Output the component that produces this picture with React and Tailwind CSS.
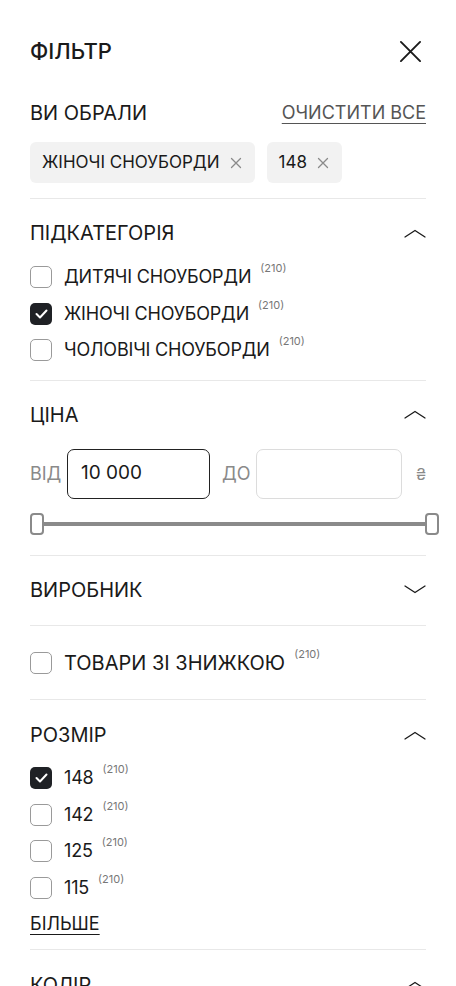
import React from 'react';

const font = { fontFamily: 'Inter, "Noto Sans", sans-serif' };

const ChevronUp = () => (
  <svg width="22" height="9" viewBox="0 0 22 9" fill="none" stroke="#1a1a1a" strokeWidth="1.3" strokeLinecap="round" strokeLinejoin="round">
    <path d="M1 8 L11 1.5 L21 8" />
  </svg>
);

const ChevronDown = () => (
  <svg width="22" height="9" viewBox="0 0 22 9" fill="none" stroke="#1a1a1a" strokeWidth="1.3" strokeLinecap="round" strokeLinejoin="round">
    <path d="M1 1 L11 7.5 L21 1" />
  </svg>
);

const Checkbox = ({ checked }) =>
  checked ? (
    <span className="flex h-[22px] w-[22px] shrink-0 items-center justify-center rounded-[5px] bg-[#1f2125]">
      <svg width="13" height="10" viewBox="0 0 13 10" fill="none" stroke="#fff" strokeWidth="2" strokeLinecap="round" strokeLinejoin="round">
        <path d="M1.5 5 L5 8.5 L11.5 1.5" />
      </svg>
    </span>
  ) : (
    <span className="h-[22px] w-[22px] shrink-0 rounded-[5px] border-[1.5px] border-[#9a9a9a] bg-white" />
  );

const Option = ({ label, checked, big }) => (
  <div className="flex h-[36.5px] items-center">
    <Checkbox checked={checked} />
    <span
      className={
        big
          ? 'ml-[12px] text-[20px] leading-none text-[#1a1a1a]'
          : 'ml-[12px] text-[18px] leading-none tracking-[-0.01em] text-[#1a1a1a]'
      }
    >
      {label}
    </span>
    <span className="ml-[9px] self-start pt-[4px] text-[11px] leading-none text-[#777]">(210)</span>
  </div>
);

const Heading = ({ title, open = true }) => (
  <div className="flex h-[22px] items-center justify-between">
    <span className="text-[20px] leading-none text-[#1a1a1a]">{title}</span>
    {open ? <ChevronUp /> : <ChevronDown />}
  </div>
);

const Chip = ({ label }) => (
  <div className="flex h-[41px] items-center rounded-[6px] bg-[#f2f2f2] pl-[12px] pr-[13px]">
    <span className="text-[17px] leading-none text-[#1a1a1a]">{label}</span>
    <svg className="ml-[10px]" width="12" height="12" viewBox="0 0 12 12" fill="none" stroke="#8a8a8a" strokeWidth="1.3" strokeLinecap="round">
      <path d="M1.5 1.5 L10.5 10.5 M10.5 1.5 L1.5 10.5" />
    </svg>
  </div>
);

export default function App() {
  return (
    <div className="min-h-screen w-[456px] overflow-hidden bg-white px-[30px]" style={font}>
      {/* header */}
      <div className="mt-[29px] flex h-[44px] items-center justify-between">
        <span className="text-[22px] font-medium leading-none text-[#1a1a1a]">ФІЛЬТР</span>
        <svg className="mr-[4px]" width="23" height="23" viewBox="0 0 24 24" fill="none" stroke="#1a1a1a" strokeWidth="2" strokeLinecap="round">
          <path d="M2 2 L22 22 M22 2 L2 22" />
        </svg>
      </div>

      <div className="mt-[25px] flex h-[30px] items-center justify-between">
        <span className="text-[20px] leading-none text-[#1a1a1a]">ВИ ОБРАЛИ</span>
        <span className="text-[18px] leading-none text-[#555] underline decoration-[1px] underline-offset-[4px]">ОЧИСТИТИ ВСЕ</span>
      </div>

      <div className="mt-[14px] flex gap-[12px]">
        <Chip label="ЖІНОЧІ СНОУБОРДИ" />
        <Chip label="148" />
      </div>

      {/* subcategory */}
      <div className="mt-[15px] border-t border-[#e8e8e8] pt-[23px] pb-[11px]">
        <Heading title="ПІДКАТЕГОРІЯ" />
        <div className="mt-[15px] flex flex-col">
          <Option label="ДИТЯЧІ СНОУБОРДИ" />
          <Option label="ЖІНОЧІ СНОУБОРДИ" checked />
          <Option label="ЧОЛОВІЧІ СНОУБОРДИ" />
        </div>
      </div>

      {/* price */}
      <div className="border-t border-[#e8e8e8] pt-[23px] pb-[20px]">
        <Heading title="ЦІНА" />
        <div className="mt-[23px] flex h-[50px] items-center">
          <span className="w-[37px] text-[18px] leading-none text-[#8a8a8a]">ВІД</span>
          <div className="flex h-[50px] w-[143px] items-center rounded-[7px] border border-[#222] pl-[13px] text-[19px] text-[#1a1a1a]">
            10 000
          </div>
          <span className="ml-[12px] w-[34px] text-[18px] leading-none text-[#8a8a8a]">ДО</span>
          <div className="h-[50px] w-[146px] rounded-[7px] border border-[#dcdcdc]" />
          <span className="ml-auto text-[16px] leading-none text-[#8a8a8a]">₴</span>
        </div>
        <div className="mt-[14px] flex h-[22px] w-[409px] items-center">
          <span className="h-[22px] w-[14px] shrink-0 rounded-[4px] border-2 border-[#8a8a8a] bg-white" />
          <span className="h-[4px] flex-1 bg-[#8a8a8a]" />
          <span className="h-[22px] w-[14px] shrink-0 rounded-[4px] border-2 border-[#8a8a8a] bg-white" />
        </div>
      </div>

      {/* manufacturer */}
      <div className="border-t border-[#e8e8e8] pt-[23px] pb-[24px]">
        <Heading title="ВИРОБНИК" open={false} />
      </div>

      {/* discount */}
      <div className="border-t border-[#e8e8e8] pt-[19px] pb-[18px]">
        <Option label="ТОВАРИ ЗІ ЗНИЖКОЮ" big />
      </div>

      {/* size */}
      <div className="border-t border-[#e8e8e8] pt-[24px] pb-[14px]">
        <Heading title="РОЗМІР" />
        <div className="mt-[14px] flex flex-col">
          <Option label="148" checked />
          <Option label="142" />
          <Option label="125" />
          <Option label="115" />
        </div>
        <div className="mt-[7px] flex h-[22px] items-center">
          <span className="text-[18px] leading-none text-[#1a1a1a] underline decoration-[1px] underline-offset-[4px]">БІЛЬШЕ</span>
        </div>
      </div>

      {/* colour */}
      <div className="border-t border-[#e8e8e8] pt-[24px] pb-[24px]">
        <Heading title="КОЛІР" />
      </div>
    </div>
  );
}
